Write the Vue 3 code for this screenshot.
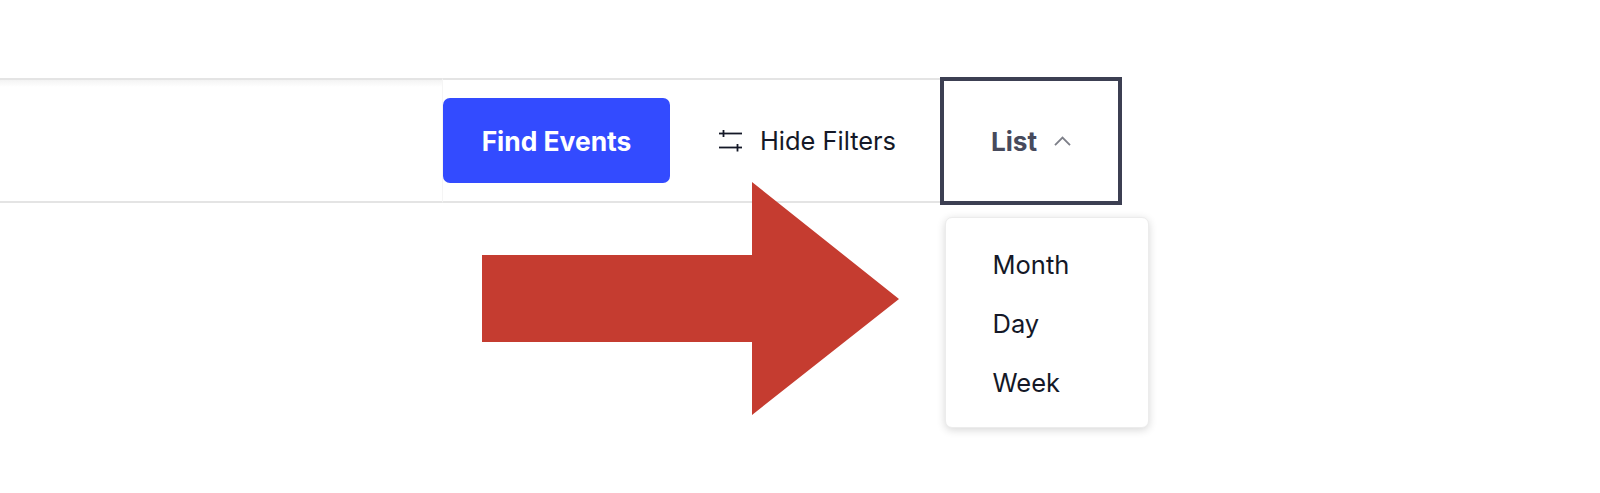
<script setup>
const views = ['Month', 'Day', 'Week']
</script>

<template>
  <div class="page">
    <div class="bar">
      <div class="search"></div>
      <div class="actions">
        <button class="find">Find Events</button>
        <button class="filters">
          <svg class="filter-icon" width="23" height="22" viewBox="0 0 23 22" fill="none" stroke="#141827" stroke-width="1.8">
            <path d="M0 3.5H23" />
            <path d="M4.5 0V7" />
            <path d="M0 17.5H23" />
            <path d="M18.5 14V21.5" />
          </svg>
          <span>Hide Filters</span>
        </button>
        <div class="switcher">
          <button class="current">
            <span>List</span>
            <svg width="17" height="10" viewBox="0 0 17 10" fill="none" stroke="#7d7f88" stroke-width="1.8">
              <path d="M1 9.2L8.5 1.5L16 9.2" />
            </svg>
          </button>
          <ul class="menu">
            <li v-for="view in views" :key="view">{{ view }}</li>
          </ul>
        </div>
      </div>
    </div>
    <svg class="arrow" width="417" height="233" viewBox="0 0 417 233">
      <path d="M0 73H270V0L417 117L270 233V160H0Z" fill="#c53c30" />
    </svg>
  </div>
</template>

<style>
body {
  background: #fff;
}
</style>

<style scoped>
.page {
  position: relative;
  height: 493px;
  padding-top: 78px;
  box-sizing: border-box;
  overflow: hidden;
  font-family: Inter, "Liberation Sans", sans-serif;
  color: #141827;
}
.bar {
  display: flex;
  width: 1122px;
  height: 125px;
}
.search {
  flex: 0 0 443px;
  box-sizing: border-box;
  border-top: 2px solid #e4e4e4;
  border-bottom: 2px solid #e4e4e4;
  border-right: 1px solid #f5f5f5;
  background: linear-gradient(#f3f3f3, #fff 7px);
}
.actions {
  flex: 1;
  display: flex;
  align-items: flex-start;
  box-sizing: border-box;
  border-top: 2px solid #e4e4e4;
  border-bottom: 2px solid #e4e4e4;
}
button {
  font: inherit;
  border: 0;
  background: none;
  padding: 0;
  color: inherit;
}
.find {
  width: 227px;
  height: 85px;
  margin-top: 18px;
  border-radius: 7px;
  background: #334bff;
  color: #fff;
  font-size: 26.4px;
  font-weight: 700;
}
.filters {
  width: 270px;
  height: 121px;
  display: flex;
  align-items: center;
  gap: 18px;
  padding-left: 49px;
  box-sizing: border-box;
  font-size: 25.4px;
}
.filter-icon {
  flex: none;
}
.switcher {
  position: relative;
  width: 182px;
  margin-top: -3px;
}
.current {
  width: 182px;
  height: 128px;
  box-sizing: border-box;
  border: 4px solid #3c3f52;
  display: flex;
  align-items: center;
  justify-content: center;
  gap: 17px;
  color: #474a5c;
  font-size: 26.2px;
  font-weight: 700;
}
.menu {
  position: absolute;
  left: 5px;
  top: 140px;
  width: 204px;
  height: 211px;
  margin: 0;
  padding: 17px 0 0 46.5px;
  box-sizing: border-box;
  list-style: none;
  background: #fff;
  border: 1px solid #ececec;
  border-radius: 7px;
  box-shadow: 0 2px 8px rgba(0, 0, 0, 0.16);
  font-size: 25.5px;
}
.menu li {
  height: 59px;
  line-height: 59px;
}
.arrow {
  position: absolute;
  left: 482px;
  top: 182px;
}
</style>
